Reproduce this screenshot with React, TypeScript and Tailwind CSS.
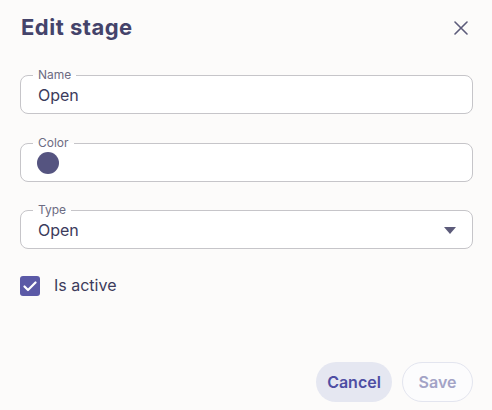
import React from "react";

function Field({ label, children, top }: { label: string; children: React.ReactNode; top: string }) {
  return (
    <div className={`relative h-[39px] rounded-lg border border-[#c6c5c9] bg-white flex items-center pl-[17px] pr-4 ${top}`}>
      <span className="absolute left-[12px] top-[-8px] px-[5px] bg-[#fcfbfa] text-[12px] leading-[14px] text-[#6c6b82]" style={{ background: "linear-gradient(to bottom, #fcfbfa 50%, #ffffff 50%)" }}>
        {label}
      </span>
      {children}
    </div>
  );
}

export default function App() {
  return (
    <div className="w-[492px] h-[410px] bg-[#fcfbfa] pl-5 pr-[19px] flex flex-col" style={{ fontFamily: "Inter, 'Noto Sans', sans-serif" }}>
      <div className="flex items-center justify-between pt-[13px] h-[41px]">
        <h1 className="text-[22px] leading-[28px] font-bold text-[#44436a] pl-[1px] tracking-[0.5px]">Edit stage</h1>
        <svg width="14" height="14" viewBox="0 0 14 14" className="mr-[5px] mt-[1px]">
          <path d="M1 1 L13 13 M13 1 L1 13" stroke="#5c5b7a" strokeWidth="1.6" strokeLinecap="round" />
        </svg>
      </div>

      <Field label="Name" top="mt-[34px]">
        <span className="text-[16px] text-[#3c3b5c] mt-[1px]">Open</span>
      </Field>

      <Field label="Color" top="mt-[29px]">
        <span className="w-[22px] h-[22px] rounded-full bg-[#555480] -ml-[1px] mt-[1px]" />
      </Field>

      <Field label="Type" top="mt-[28px]">
        <span className="text-[16px] text-[#3c3b5c] flex-1 mt-[1px]">Open</span>
        <svg width="12" height="7" viewBox="0 0 12 7" className="mr-[0px] mt-[1px]">
          <path d="M0 0 L12 0 L6 7 Z" fill="#5c5b7a" />
        </svg>
      </Field>

      <div className="flex items-center mt-[27px]">
        <div className="w-[20px] h-[20px] rounded-[3px] bg-[#5b59a6] flex items-center justify-center">
          <svg width="14" height="11" viewBox="0 0 14 11">
            <path d="M1.5 5.5 L5 9 L12.5 1.5" stroke="white" strokeWidth="2.2" fill="none" strokeLinecap="round" strokeLinejoin="round" />
          </svg>
        </div>
        <span className="ml-[14px] text-[16px] leading-[20px] text-[#3c3b5c] -mt-[3px]">Is active</span>
      </div>

      <div className="flex justify-end gap-[10px] mt-auto mb-[8px]">
        <button className="h-[40px] w-[76px] rounded-full bg-[#e5e7f1] text-[16px] font-semibold text-[#4e4ea3]">Cancel</button>
        <button className="h-[40px] w-[71px] rounded-full bg-[#fcfcfd] border border-[#e3e5ef] text-[16px] font-semibold text-[#a3a3c6]">Save</button>
      </div>
    </div>
  );
}
